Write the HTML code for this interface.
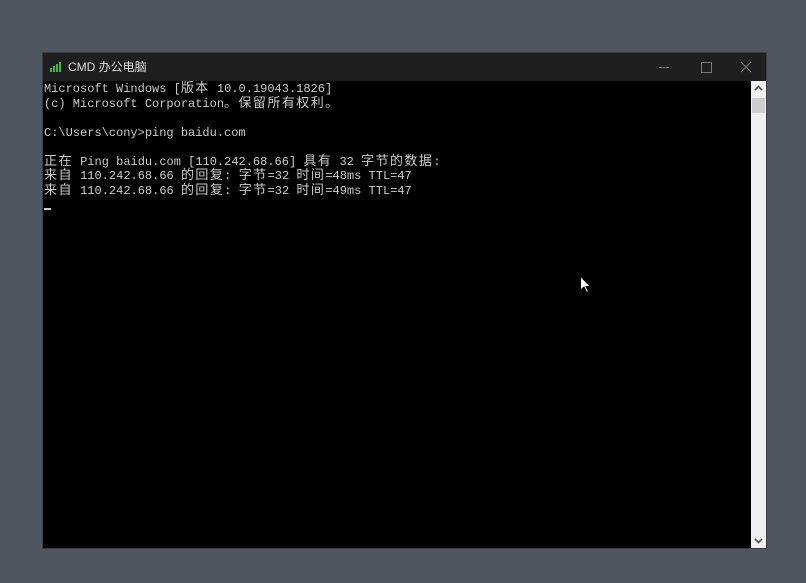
<!DOCTYPE html>
<html><head><meta charset="utf-8"><style>
body{margin:0;width:806px;height:583px;background:#4f565f;position:relative;overflow:hidden;font-family:"Liberation Sans","Noto Sans CJK SC",sans-serif}
.win{position:absolute;left:42px;top:52px;width:725px;height:497px;background:#000;border:1px solid #3a3d42;box-sizing:border-box}
.title{position:absolute;left:0;top:0;width:100%;height:28px;background:#1f1f1f;color:#ddd;font-size:12px}
.title span{position:absolute;left:25px;top:5px}
.con{position:absolute;left:1px;top:29px;color:#cccccc;font-family:"Liberation Mono","Noto Sans CJK SC",monospace;font-size:12px;line-height:14.5px;white-space:pre}
.c{font-size:13px;letter-spacing:1.45px;line-height:14.5px}
.sb{position:absolute;left:708px;top:28px;width:15px;height:467px;background:#f0f0f0}
.thumb{position:absolute;left:1px;top:17px;width:13px;height:15px;background:#cdcdcd}
</style></head><body>
<div class="win">
<div class="title">
<svg style="position:absolute;left:7px;top:9px" width="12" height="10"><rect x="0" y="6" width="2" height="4" fill="#3fb84a"/><rect x="3" y="4" width="2" height="6" fill="#3fb84a"/><rect x="6" y="2" width="2" height="8" fill="#3fb84a"/><rect x="9" y="0" width="2" height="10" fill="#3fb84a"/></svg>
<span>CMD 办公电脑</span>
<div style="position:absolute;left:616px;top:14px;width:10px;height:1px;background:#777"></div>
<div style="position:absolute;left:658px;top:9px;width:9px;height:9px;border:1px solid #777"></div>
<svg style="position:absolute;left:697px;top:8px" width="12" height="12"><path d="M1 1L11 11M11 1L1 11" stroke="#777" stroke-width="1.2"/></svg>
</div>
<div class="con">Microsoft Windows [<span class="c">版本</span> 10.0.19043.1826]
(c) Microsoft Corporation<span class="c">。保留所有权利。</span>

C:\Users\cony&gt;ping baidu.com

<span class="c">正在</span> Ping baidu.com [110.242.68.66] <span class="c">具有</span> 32 <span class="c">字节的数据</span>:
<span class="c">来自</span> 110.242.68.66 <span class="c">的回复</span>: <span class="c">字节</span>=32 <span class="c">时间</span>=48ms TTL=47
<span class="c">来自</span> 110.242.68.66 <span class="c">的回复</span>: <span class="c">字节</span>=32 <span class="c">时间</span>=49ms TTL=47
<span style="display:inline-block;width:7px;height:2px;background:#ccc;vertical-align:bottom;margin-bottom:3px"></span></div>
<div class="sb"><svg style="position:absolute;left:3px;top:4px" width="9" height="6"><path d="M1 5L4.5 1.5L8 5" stroke="#555" stroke-width="1.6" fill="none"/></svg><div class="thumb"></div><svg style="position:absolute;left:3px;top:457px" width="9" height="6"><path d="M1 1L4.5 4.5L8 1" stroke="#555" stroke-width="1.6" fill="none"/></svg></div>
</div>
<svg style="position:absolute;left:580px;top:276px" width="12" height="18"><path d="M0.5 0.5L0.5 14L4 11L6.5 16.5L8.5 15.5L6 10.5L10.5 10.5Z" fill="#fff" stroke="#000" stroke-width="1"/></svg>
</body></html>
